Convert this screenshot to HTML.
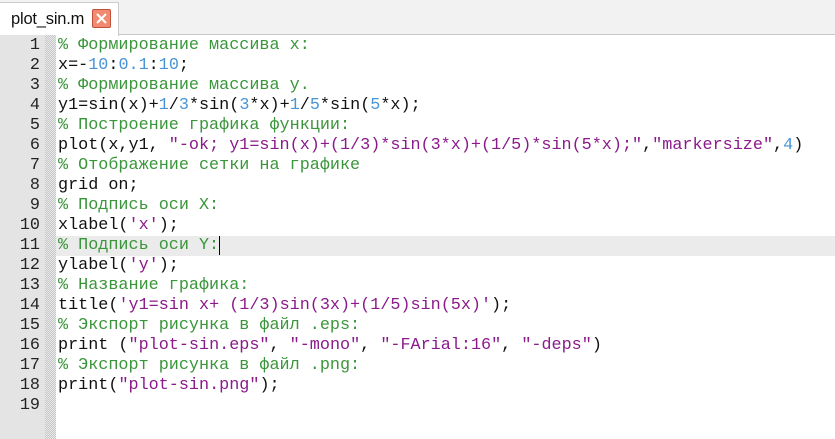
<!DOCTYPE html>
<html><head><meta charset="utf-8"><style>
body{margin:0;width:835px;height:439px;overflow:hidden;background:#fff;font-family:"Liberation Sans",sans-serif;position:relative}
#tabbar{position:absolute;left:0;top:0;width:835px;height:34px;background:#f2f2f2;border-bottom:1px solid #c8c8c8}
#tab{position:absolute;left:0;top:2px;width:118px;height:33px;background:#fff;border-right:1px solid #ccc;border-top:1px solid #ccc}
#tab span{position:absolute;left:11px;top:7px;font-size:16.5px;color:#111;letter-spacing:-0.2px}
#x{position:absolute;left:92px;top:6px;width:19px;height:19px;background:#f08a70;border:1px solid #c0503a;box-sizing:border-box;border-radius:2px}
#gut{position:absolute;left:0;top:35px;width:45px;height:404px;background:#e4e4e4}
#dot{position:absolute;left:45px;top:35px;width:11px;height:404px;background:repeating-conic-gradient(#c8c8c8 0 25%,#e8e8e8 0 50%) 0 0/2px 2px}
#hl{position:absolute;left:56px;top:236px;width:779px;height:20px;background:#ebebeb}
.ln{position:absolute;left:0;width:40px;text-align:right;font-family:"Liberation Mono",monospace;font-size:16.8px;color:#222}
.cd{position:absolute;left:58px;white-space:pre;font-family:"Liberation Mono",monospace;font-size:16.8px;color:#111}
.c{color:#3a963a}.n{color:#4a94d6}.s{color:#8b1a8b}
</style></head><body>
<div id="tabbar"></div>
<div id="tab"><span>plot_sin.m</span><div id="x"><svg width="17" height="17" style="position:absolute;left:0;top:0"><path d="M4 4L13 13M13 4L4 13" stroke="#fff" stroke-width="2"/></svg></div></div>
<div id="gut"></div><div id="dot"></div><div id="hl"></div>
<div id="lines"></div>
<script>
const L=[
'<span class="c">% Формирование массива x:</span>',
'x=-<span class="n">10</span>:<span class="n">0.1</span>:<span class="n">10</span>;',
'<span class="c">% Формирование массива y.</span>',
'y1=sin(x)+<span class="n">1</span>/<span class="n">3</span>*sin(<span class="n">3</span>*x)+<span class="n">1</span>/<span class="n">5</span>*sin(<span class="n">5</span>*x);',
'<span class="c">% Построение графика функции:</span>',
'plot(x,y1, <span class="s">"-ok; y1=sin(x)+(1/3)*sin(3*x)+(1/5)*sin(5*x);"</span>,<span class="s">"markersize"</span>,<span class="n">4</span>)',
'<span class="c">% Отображение сетки на графике</span>',
'grid on;',
'<span class="c">% Подпись оси X:</span>',
'xlabel(<span class="s">\'x\'</span>);',
'<span class="c">% Подпись оси Y:</span><span style="border-left:1px solid #000"></span>',
'ylabel(<span class="s">\'y\'</span>);',
'<span class="c">% Название графика:</span>',
'title(<span class="s">\'y1=sin x+ (1/3)sin(3x)+(1/5)sin(5x)\'</span>);',
'<span class="c">% Экспорт рисунка в файл .eps:</span>',
'print (<span class="s">"plot-sin.eps"</span>, <span class="s">"-mono"</span>, <span class="s">"-FArial:16"</span>, <span class="s">"-deps"</span>)',
'<span class="c">% Экспорт рисунка в файл .png:</span>',
'print(<span class="s">"plot-sin.png"</span>);',
''];
let h='';L.forEach((t,i)=>{const y=36+i*20;h+=`<div class="ln" style="top:${y}px">${i+1}</div><div class="cd" style="top:${y}px">${t}</div>`});
document.getElementById('lines').innerHTML=h;
</script>
</body></html>
